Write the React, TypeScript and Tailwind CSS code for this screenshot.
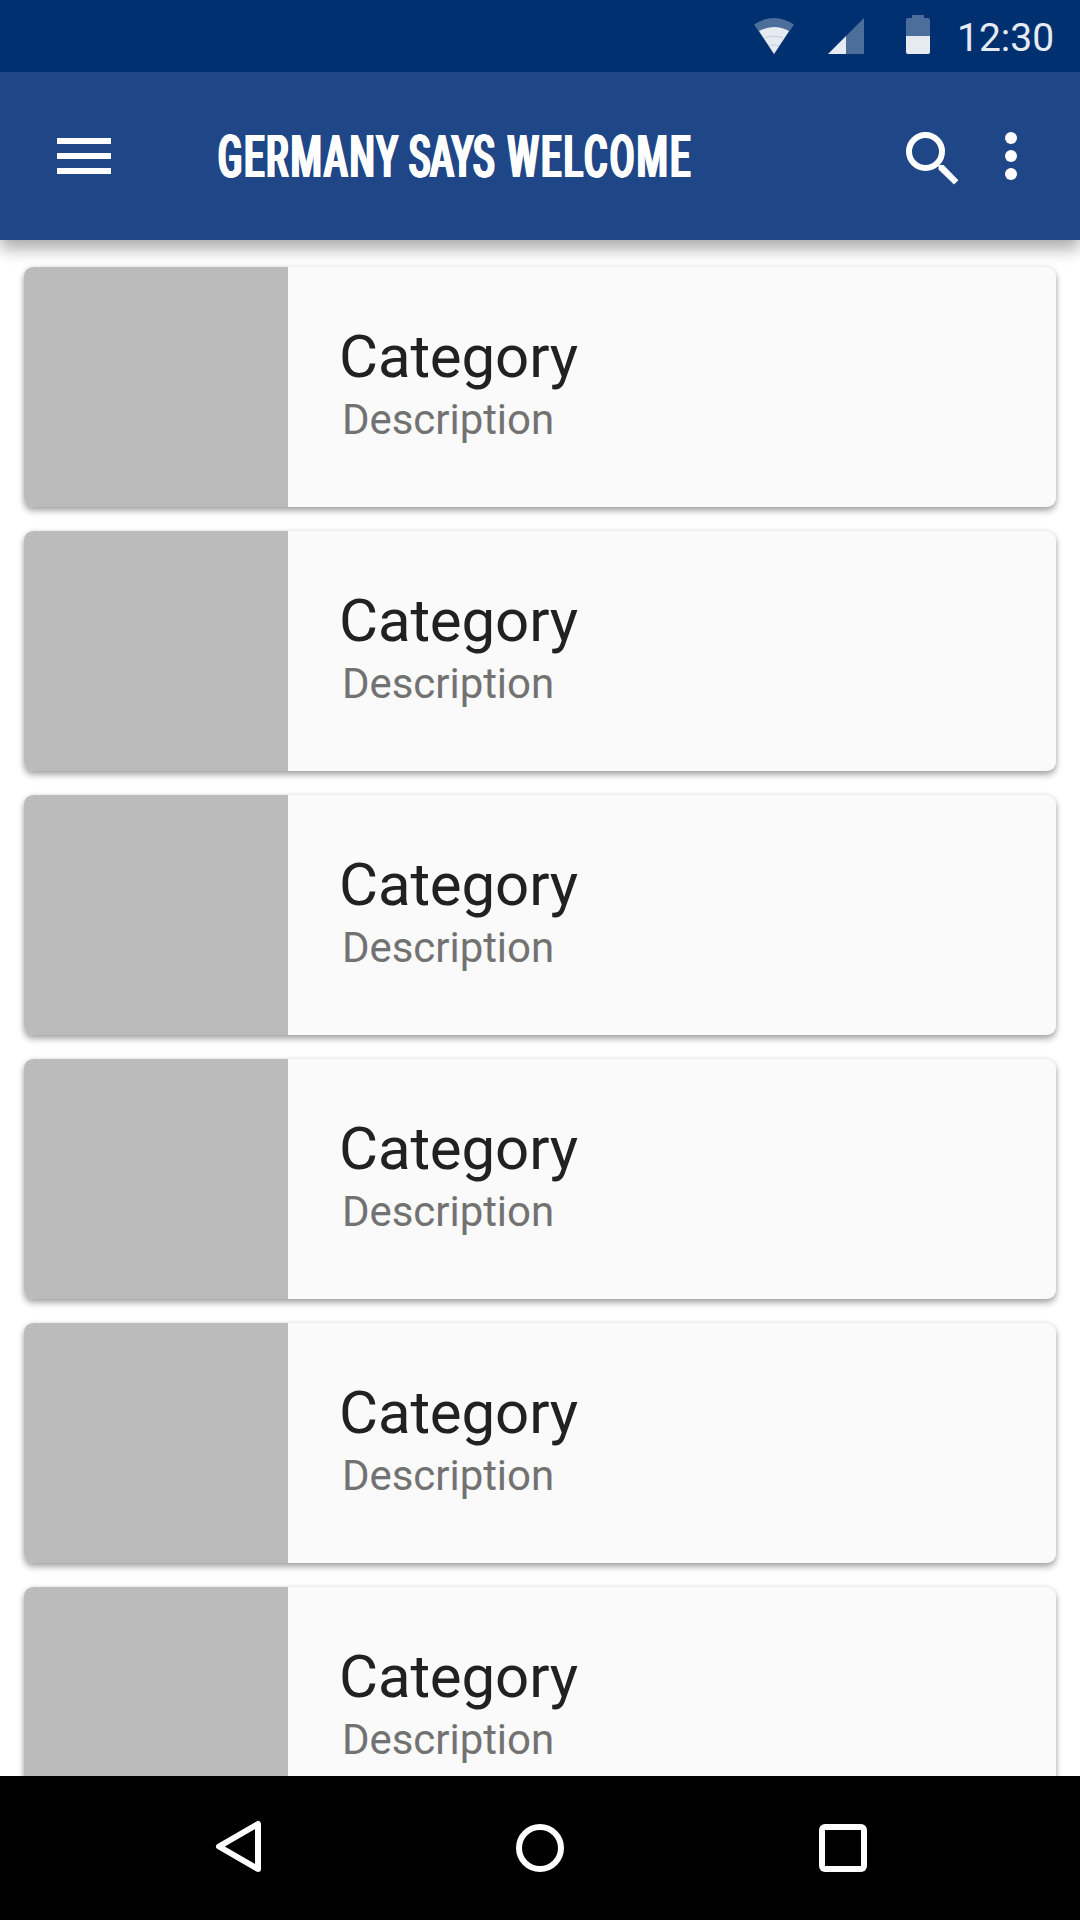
const cards = [0, 1, 2, 3, 4, 5];

function StatusBar() {
  return (
    <div className="relative z-20 flex h-[72px] shrink-0 items-start justify-end bg-[#003070] pr-[26px]">
      <svg className="mt-[15px] h-[39px] w-[180px]" viewBox="752 15 180 39">
        <path d="M754 24.5Q774 11.5 794 24.5L774 54Z" fill="#4c6e9b" />
        <path d="M759 31Q774 22.8 789 31L774 54Z" fill="#e6eaf1" />
        <path d="M765 37.8Q774 34.6 783 37.8M769 45.8Q774 44 779 45.8" fill="none" stroke="#b9c6d9" strokeWidth="0.8" />
        <path d="M846 36L864 18V54H846Z" fill="#4c6e9b" />
        <path d="M828 54L846 36V54Z" fill="#e6eaf1" />
        <path d="M912 15H924V18H928Q930 18 930 20V36H906V20Q906 18 908 18H912Z" fill="#4c6e9b" />
        <path d="M906 36H930V52Q930 54 928 54H908Q906 54 906 52Z" fill="#e6eaf1" />
      </svg>
      <span className="ml-[25px] mt-[14px] w-[97px] whitespace-nowrap text-[39px] leading-[48px] text-[#e6eaf1]">12:30</span>
    </div>
  );
}

function AppBar() {
  return (
    <header className="relative z-10 flex h-[168px] shrink-0 items-start bg-[#1f4686] shadow-[0_9px_15px_rgba(0,0,0,0.33)]">
      <div className="ml-[57px] mt-[66px] flex w-[54px] flex-col gap-[9px]">
        <div className="h-[6px] bg-white" />
        <div className="h-[6px] bg-white" />
        <div className="h-[6px] bg-white" />
      </div>
      <h1 className="ml-[107px] mt-[51px] w-[639px] origin-left scale-x-[0.6] whitespace-nowrap text-[59px] font-medium leading-[68px] tracking-[2.9px] text-white [text-shadow:1px_0_0_#fff,-1px_0_0_#fff,2px_0_0_#fff,-2px_0_0_#fff]">
        <span className="tracking-[3.5px]">GERMANY</span>{" "}
        <span className="ml-[-3px] tracking-[0px]">SAYS</span>{" "}
        <span className="ml-[4px] tracking-[4.2px]">WELCOME</span>
      </h1>
      <svg className="ml-[47px] mt-[58px] h-[56px] w-[56px]" viewBox="904 130 56 56">
        <circle cx="925.5" cy="151.5" r="16.5" fill="none" stroke="#fff" strokeWidth="6" />
        <path d="M938.5 167.5V165H943.5L958.4 180.2L954 184.4L938.5 169.5Z" fill="#fff" />
      </svg>
      <div className="ml-[45px] mt-[60px] flex flex-col gap-[6px]">
        <div className="size-[12px] rounded-full bg-white" />
        <div className="size-[12px] rounded-full bg-white" />
        <div className="size-[12px] rounded-full bg-white" />
      </div>
    </header>
  );
}

function Card() {
  return (
    <article className="flex h-[240px] shrink-0 rounded-[9px] bg-[#fafafa] shadow-[0_4px_6px_rgba(0,0,0,0.33),0_0_5px_rgba(0,0,0,0.1)]">
      <div className="w-[264px] rounded-l-[9px] bg-[#bbb]" />
      <div className="pl-[51px] pt-[55px]">
        <h2 className="text-[60px] leading-[70px] tracking-[-0.15px] text-[#212121]">Category</h2>
        <p className="pl-[3px] text-[42px] leading-[56px] tracking-[-0.05px] text-[#727272]">Description</p>
      </div>
    </article>
  );
}

function NavBar() {
  return (
    <nav className="flex h-[144px] shrink-0 bg-black pl-[214px] pt-[43px]">
      <svg className="h-[56px] w-[49px]" viewBox="214 1819 49 56" fill="none" stroke="#fff" strokeWidth="6" strokeLinejoin="round">
        <path d="M219 1846.5L258 1824V1869Z" />
      </svg>
      <div className="ml-[253px] mt-[5px] size-[48px] rounded-full border-[6px] border-white" />
      <div className="ml-[255px] mt-[5px] flex size-[48px] rounded-[6px] bg-white p-[6px]">
        <div className="flex-1 bg-black" />
      </div>
    </nav>
  );
}

export default function App() {
  return (
    <div className="flex h-[1920px] w-[1080px] flex-col overflow-hidden bg-white font-['Roboto',sans-serif]">
      <StatusBar />
      <AppBar />
      <main className="flex min-h-0 flex-1 flex-col gap-[24px] overflow-hidden px-[24px] pt-[27px]">
        {cards.map((id) => (
          <Card key={id} />
        ))}
      </main>
      <NavBar />
    </div>
  );
}
